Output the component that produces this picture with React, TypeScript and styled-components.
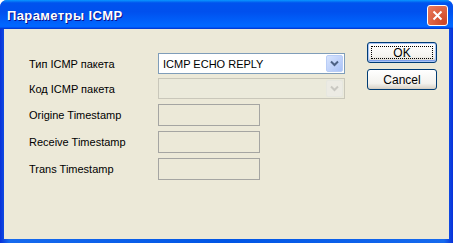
import styled, { createGlobalStyle } from "styled-components";

const Global = createGlobalStyle`
  html, body {
    margin: 0;
    padding: 0;
    background: #ffffff;
  }
  body {
    font-family: "Liberation Sans", Arial, sans-serif;
    font-size: 11px;
  }
`;

const Window = styled.div`
  width: 453px;
  height: 243px;
  display: flex;
  flex-direction: column;
  background: linear-gradient(
    to right,
    #0831d9 0%,
    #166aee 2%,
    #0055e5 50%,
    #166aee 98%,
    #0831d9 100%
  );
  border-radius: 7px 7px 0 0;
  overflow: hidden;
`;

const TitleBar = styled.div`
  height: 29px;
  flex: none;
  display: flex;
  align-items: center;
  padding: 0 5px 0 7px;
  background: linear-gradient(
    to bottom,
    #0997ff 0%,
    #0053ee 10%,
    #0050ee 40%,
    #0066ff 86%,
    #0066ff 92%,
    #005bff 94%,
    #003dd7 97%,
    #003dd7 100%
  );
`;

const Title = styled.div`
  flex: 1;
  color: #ffffff;
  font-family: "Liberation Sans", Arial, sans-serif;
  font-weight: bold;
  font-size: 13px;
  letter-spacing: 0.4px;
  text-shadow: 1px 1px #0f1089;
  padding-top: 1px;
`;

const CloseButton = styled.div`
  width: 21px;
  height: 21px;
  box-sizing: border-box;
  border: 1px solid #ffffff;
  border-radius: 3px;
  background: radial-gradient(
    circle at 85% 85%,
    #cc4628 0%,
    #dc6040 50%,
    #e97c5e 100%
  );
  display: flex;
  align-items: center;
  justify-content: center;
  margin-top: 1px;
`;

const Body = styled.div`
  flex: 1;
  margin: 0 4px 4px 4px;
  background: #ece9d8;
  display: flex;
`;

const Form = styled.div`
  display: flex;
  flex-direction: column;
  padding: 24px 0 0 25px;
`;

const Row = styled.div<{ $gap: number }>`
  display: flex;
  align-items: center;
  margin-bottom: ${(p) => p.$gap}px;
`;

const Label = styled.div`
  width: 129px;
  color: #000000;
  font-size: 11px;
`;

const Combo = styled.div<{ $disabled?: boolean }>`
  width: 187px;
  height: 21px;
  box-sizing: border-box;
  border: 1px solid ${(p) => (p.$disabled ? "#c9c7ba" : "#7f9db9")};
  background: ${(p) => (p.$disabled ? "#ebeadb" : "#ffffff")};
  display: flex;
  align-items: center;
  padding: 1px;
`;

const ComboText = styled.div`
  flex: 1;
  padding-left: 3px;
  font-size: 11px;
  color: #000000;
`;

const ComboArrow = styled.div<{ $disabled?: boolean }>`
  width: 17px;
  height: 17px;
  box-sizing: border-box;
  border-radius: 2px;
  border: 1px solid ${(p) => (p.$disabled ? "#e6e7e0" : "#b9cdf6")};
  background: ${(p) =>
    p.$disabled
      ? "#ecebe4"
      : "linear-gradient(135deg, #d7e4fd 0%, #bdd0fa 60%, #a9c2f8 100%)"};
  display: flex;
  align-items: center;
  justify-content: center;
`;

const TextBox = styled.div`
  width: 102px;
  height: 22px;
  box-sizing: border-box;
  border: 1px solid #a5a5a2;
  background: #ece9d8;
`;

const Buttons = styled.div`
  margin-left: auto;
  padding: 13px 12px 0 0;
  display: flex;
  flex-direction: column;
  gap: 6px;
`;

const Button = styled.div<{ $focused?: boolean }>`
  width: 70px;
  height: 21px;
  box-sizing: border-box;
  border: 1px solid #003c74;
  border-radius: 3px;
  background: linear-gradient(to bottom, #ffffff 0%, #f3f2ee 70%, #d6d0c5 100%);
  box-shadow: ${(p) =>
    p.$focused
      ? "inset 0 0 0 1px #a9c4f5, inset 0 -1px 0 1px #7fa0e9"
      : "inset 0 -1px 0 #d6d0c5"};
  display: flex;
  align-items: center;
  justify-content: center;
  font-size: 12px;
  color: #000000;
  position: relative;
  ${(p) =>
    p.$focused &&
    `
    &::after {
      content: "";
      position: absolute;
      left: 3px;
      top: 3px;
      right: 3px;
      bottom: 3px;
      border: 1px dotted #000000;
    }
  `}
`;

function Chevron({ color }: { color: string }) {
  return (
    <svg width="9" height="7" viewBox="0 0 9 7">
      <path
        d="M1 1.5 L4.5 5 L8 1.5"
        fill="none"
        stroke={color}
        strokeWidth="2"
      />
    </svg>
  );
}

export default function App() {
  return (
    <>
      <Global />
      <Window>
        <TitleBar>
          <Title>Параметры ICMP</Title>
          <CloseButton>
            <svg width="11" height="11" viewBox="0 0 11 11">
              <path
                d="M1.5 1.5 L9.5 9.5 M9.5 1.5 L1.5 9.5"
                stroke="#ffffff"
                strokeWidth="2"
              />
            </svg>
          </CloseButton>
        </TitleBar>
        <Body>
          <Form>
            <Row $gap={4}>
              <Label>Тип ICMP пакета</Label>
              <Combo>
                <ComboText>ICMP ECHO REPLY</ComboText>
                <ComboArrow>
                  <Chevron color="#4d6185" />
                </ComboArrow>
              </Combo>
            </Row>
            <Row $gap={5}>
              <Label>Код ICMP пакета</Label>
              <Combo $disabled>
                <ComboText />
                <ComboArrow $disabled>
                  <Chevron color="#c9c8c2" />
                </ComboArrow>
              </Combo>
            </Row>
            <Row $gap={5}>
              <Label>Origine Timestamp</Label>
              <TextBox />
            </Row>
            <Row $gap={5}>
              <Label>Receive Timestamp</Label>
              <TextBox />
            </Row>
            <Row $gap={0}>
              <Label>Trans Timestamp</Label>
              <TextBox />
            </Row>
          </Form>
          <Buttons>
            <Button $focused>OK</Button>
            <Button>Cancel</Button>
          </Buttons>
        </Body>
      </Window>
    </>
  );
}
